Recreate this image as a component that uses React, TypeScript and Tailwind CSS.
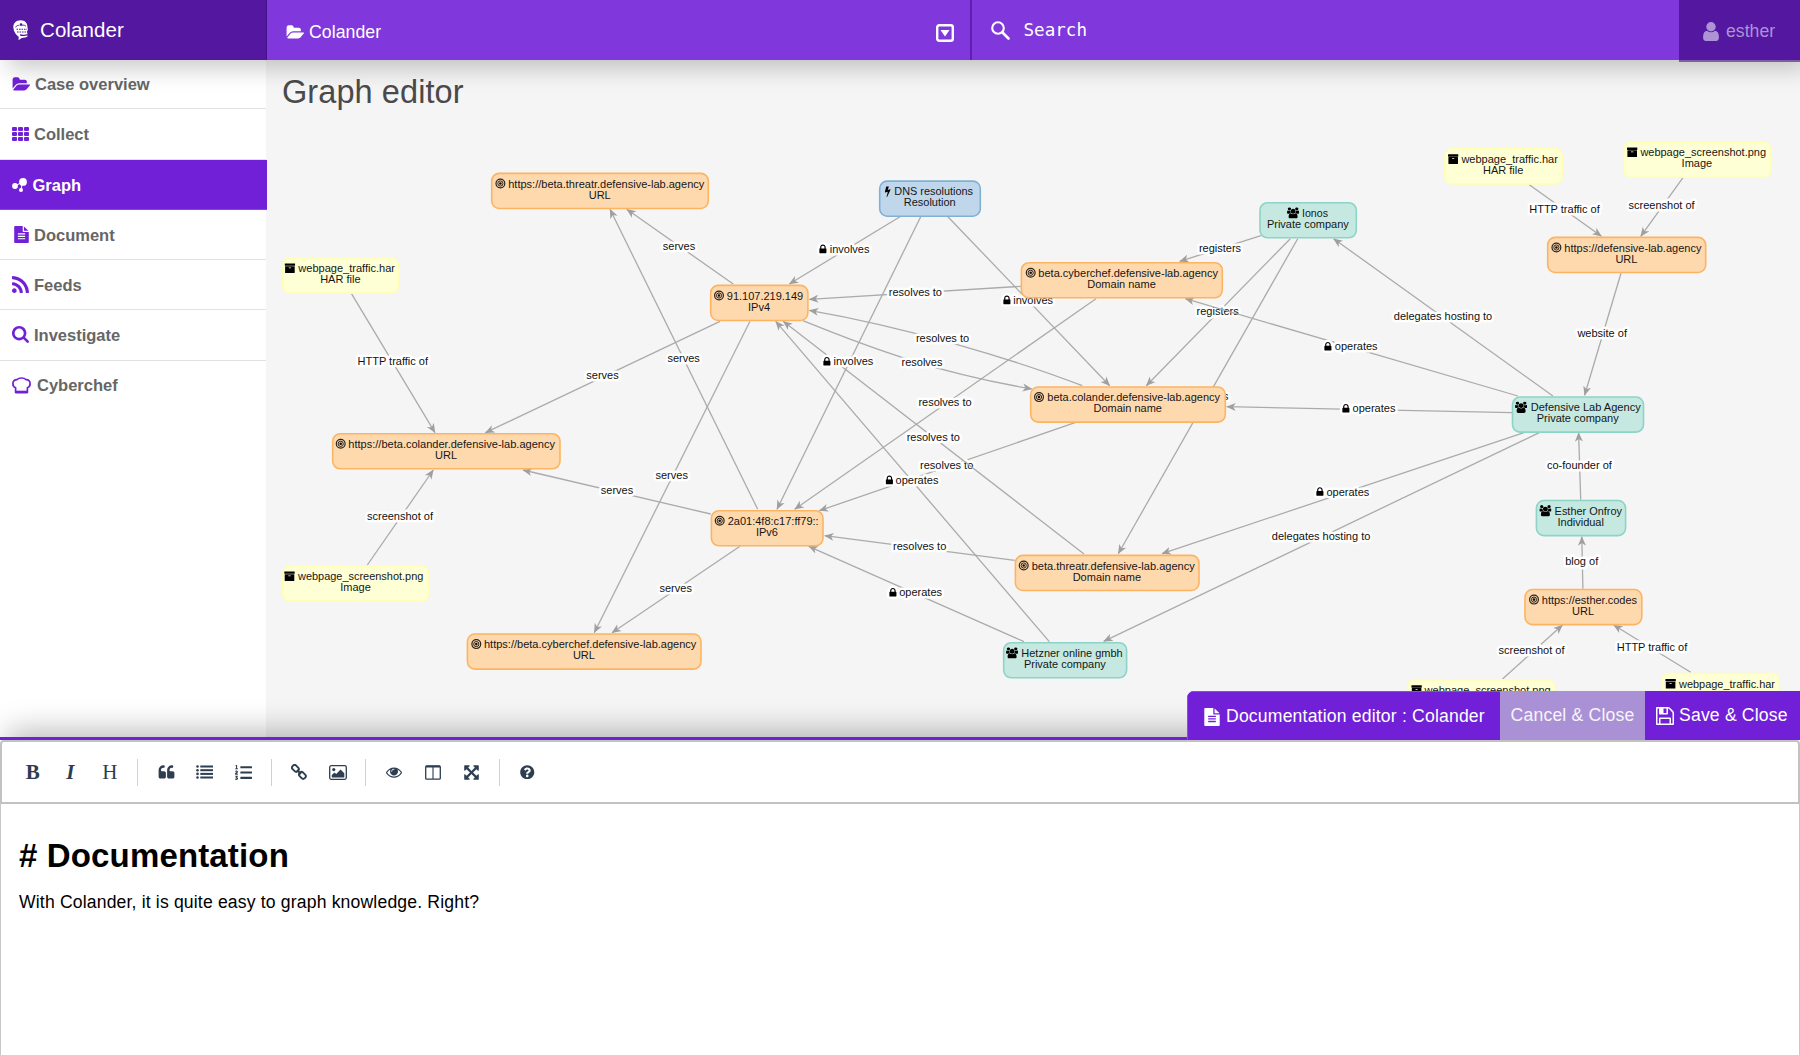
import React from "react";
import { FaListOl, FaQuestionCircle } from "react-icons/fa";

const PATHS = {
  folder:
    "M1943 952q0 31-31 66l-336 396q-43 51-120.5 86.5t-143.5 35.5h-1088q-34 0-60.5-13t-26.5-43q0-31 31-66l336-396q43-51 120.5-86.5t143.5-35.5h1088q34 0 60.5 13t26.5 43zm-343-344v160h-832q-94 0-197 47.5t-164 119.5l-337 396-5 6q0-4-.5-12.5t-.5-12.5v-960q0-92 66-158t158-66h320q92 0 158 66t66 158v32h544q92 0 158 66t66 158z",
  users:
    "M593 896q-162 5-265 128h-134q-82 0-138-40.5t-56-118.5q0-353 124-353 6 0 43.5 21t97.5 42.5 119 21.5q67 0 133-23-5 37-5 66 0 139 81 256zm1071 637q0 120-73 189.5t-194 69.5h-874q-121 0-194-69.5t-73-189.5q0-53 3.5-103.5t14-109 26.5-108.5 43-97.5 62-81 85.5-53.5 111.5-20q10 0 43 21.5t73 48 107 48 135 21.5 135-21.5 107-48 73-48 43-21.5q61 0 111.5 20t85.5 53.5 62 81 43 97.5 26.5 108.5 14 109 3.5 103.5zm-1024-1277q0 106-75 181t-181 75-181-75-75-181 75-181 181-75 181 75 75 181zm704 384q0 159-112.5 271.5t-271.5 112.5-271.5-112.5-112.5-271.5 112.5-271.5 271.5-112.5 271.5 112.5 112.5 271.5zm576 225q0 78-56 118.5t-138 40.5h-134q-103-123-265-128 81-117 81-256 0-29-5-66 66 23 133 23 59 0 119-21.5t97.5-42.5 43.5-21q124 0 124 353zm-128-609q0 106-75 181t-181 75-181-75-75-181 75-181 181-75 181 75 75 181z",
  archive:
    "M1088 832q0-26-19-45t-45-19h-256q-26 0-45 19t-19 45 19 45 45 19h256q26 0 45-19t19-45zm576-192v960q0 26-19 45t-45 19h-1408q-26 0-45-19t-19-45v-960q0-26 19-45t45-19h1408q26 0 45 19t19 45zm64-448v256q0 26-19 45t-45 19h-1536q-26 0-45-19t-19-45v-256q0-26 19-45t45-19h1536q26 0 45 19t19 45z",
  lock: "M640 768h512v-192q0-106-75-181t-181-75-181 75-75 181v192zm832 96v576q0 40-28 68t-68 28h-960q-40 0-68-28t-28-68v-576q0-40 28-68t68-28h32v-192q0-184 132-316t316-132 316 132 132 316v192h32q40 0 68 28t28 68z",
  bolt: "M1333 566q18 20 7 44l-540 1157q-13 25-42 25-4 0-14-2-17-5-25.5-19t-4.5-30l197-808-406 101q-4 1-12 1-18 0-31-11-18-15-13-39l201-825q4-16 16-26t28-10h328q19 0 32 12.5t13 29.5q0 8-5 18l-171 463 396-98q8-2 12-2 19 0 34 15z",
  file: "M1596 476q14 14 28 36h-472v-472q22 14 36 28zm-476 164h544v1056q0 40-28 68t-68 28h-1344q-40 0-68-28t-28-68v-1600q0-40 28-68t68-28h800v544q0 40 28 68t68 28zm160 736v-64q0-14-9-23t-23-9h-704q-14 0-23 9t-9 23v64q0 14 9 23t23 9h704q14 0 23-9t9-23zm0-256v-64q0-14-9-23t-23-9h-704q-14 0-23 9t-9 23v64q0 14 9 23t23 9h704q14 0 23-9t9-23zm0-256v-64q0-14-9-23t-23-9h-704q-14 0-23 9t-9 23v64q0 14 9 23t23 9h704q14 0 23-9t9-23z",
  rss: "M576 1344q0 80-56 136t-136 56-136-56-56-136 56-136 136-56 136 56 56 136zm512 123q2 28-17 48-18 21-47 21h-135q-25 0-43-16.5t-20-41.5q-22-229-184.5-391.5t-391.5-184.5q-25-2-41.5-20t-16.5-43v-135q0-29 21-47 17-17 43-17h5q160 13 306 80.5t259 181.5q114 113 181.5 259t80.5 306zm512 2q2 27-18 47-18 20-46 20h-143q-26 0-44.5-17.5t-19.5-42.5q-12-215-101-408.5t-231.5-336-336-231.5-408.5-102q-25-1-42.5-19.5t-17.5-43.5v-143q0-28 20-46 18-18 44-18h3q262 13 501.5 120t425.5 294q187 186 294 425.5t120 501.5z",
  search:
    "M1216 832q0-185-131.5-316.5t-316.5-131.5-316.5 131.5-131.5 316.5 131.5 316.5 316.5 131.5 316.5-131.5 131.5-316.5zm512 832q0 52-38 90t-90 38q-54 0-90-38l-343-342q-179 124-399 124-143 0-273.5-55.5t-225-150-150-225-55.5-273.5 55.5-273.5 150-225 225-150 273.5-55.5 273.5 55.5 225 150 150 225 55.5 273.5q0 220-124 399l343 343q37 37 37 90z",
  user: "M1536 1399q0 109-62.5 187t-150.5 78h-854q-88 0-150.5-78t-62.5-187q0-85 8.5-160.5t31.5-152 58.5-131 94-89 134.5-34.5q131 128 313 128t313-128q76 0 134.5 34.5t94 89 58.5 131 31.5 152 8.5 160.5zm-256-887q0 159-112.5 271.5t-271.5 112.5-271.5-112.5-112.5-271.5 112.5-271.5 271.5-112.5 271.5 112.5 112.5 271.5z",
  save: "M512 1536h768v-384h-768v384zm896 0h128v-896q0-14-10-38.5t-20-34.5l-281-281q-10-10-34-20t-39-10v416q0 40-28 68t-68 28h-576q-40 0-68-28t-28-68v-416h-128v1280h128v-416q0-40 28-68t68-28h832q40 0 68 28t28 68v416zm-384-928v-320q0-13-9.5-22.5t-22.5-9.5h-192q-13 0-22.5 9.5t-9.5 22.5v320q0 13 9.5 22.5t22.5 9.5h192q13 0 22.5-9.5t9.5-22.5zm640 32v928q0 40-28 68t-68 28h-1344q-40 0-68-28t-28-68v-1344q0-40 28-68t68-28h928q40 0 88 20t76 48l280 280q28 28 48 76t20 88z",
  quote:
    "M832 960v384q0 80-56 136t-136 56h-384q-80 0-136-56t-56-136v-704q0-104 40.5-198.5t109.5-163.5 163.5-109.5 198.5-40.5h64q26 0 45 19t19 45v128q0 26-19 45t-45 19h-64q-106 0-181 75t-75 181v32q0 40 28 68t68 28h224q80 0 136 56t56 136zm896 0v384q0 80-56 136t-136 56h-384q-80 0-136-56t-56-136v-704q0-104 40.5-198.5t109.5-163.5 163.5-109.5 198.5-40.5h64q26 0 45 19t19 45v128q0 26-19 45t-45 19h-64q-106 0-181 75t-75 181v32q0 40 28 68t68 28h224q80 0 136 56t56 136z",
  eye: "M1664 960q-152-236-381-353 61 104 61 225 0 185-131.5 316.5t-316.5 131.5-316.5-131.5-131.5-316.5q0-121 61-225-229 117-381 353 133 205 333.5 326.5t434.5 121.5 434.5-121.5 333.5-326.5zm-720-384q0-20-14-34t-34-14q-125 0-214.5 89.5t-89.5 214.5q0 20 14 34t34 14 34-14 14-34q0-86 61-147t147-61q20 0 34-14t14-34zm848 384q0 34-20 69-140 230-376.5 368.5t-499.5 138.5-499.5-139-376.5-368q-20-35-20-69t20-69q140-229 376.5-368t499.5-139 499.5 139 376.5 368q20 35 20 69z",
  expand:
    "M1411 541l-355 355 355 355 144-144q29-31 70-14 39 17 39 59v448q0 26-19 45t-45 19h-448q-42 0-59-40-17-39 14-69l144-144-355-355-355 355 144 144q31 30 14 69-17 40-59 40h-448q-26 0-45-19t-19-45v-448q0-42 40-59 39-17 69 14l144 144 355-355-355-355-144 144q-19 19-45 19-12 0-24-5-40-17-40-59v-448q0-26 19-45t45-19h448q42 0 59 40 17 39-14 69l-144 144 355 355 355-355-144-144q-31-30-14-69 17-40 59-40h448q26 0 45 19t19 45v448q0 42-39 59-13 5-25 5-26 0-45-19z",
};

type IconName = keyof typeof PATHS;

function Icon({ name, className, box = "0 0 1792 1792" }: { name: IconName; className: string; box?: string }) {
  return (
    <svg viewBox={box} className={className} fill="currentColor">
      <path d={PATHS[name]} />
    </svg>
  );
}

function Logo() {
  return (
    <svg viewBox="0 0 16 21" className="h-[21px] w-4 shrink-0" fill="none">
      <path
        d="M.3 7.500C.2 3 3.200.2 7.600.2c4.400 0 7 2.800 6.900 7.300l.4 2.600-.8.900.6 5.300c-1.200 1.100-3.600 1.500-6 1.600l-3.200 2.400.2-3.600C3.300 15.300.8 12 .3 7.500z"
        fill="#fff"
      />
      <path d="M2.500 7.400C3.500 5.500 5 5 6.300 5.600M9 5.400c1.500-.6 3-.2 4 1" stroke="#5317a0" strokeWidth=".9" />
      <path d="M3.500 9.300h10.500M4 12h11" stroke="#5317a0" strokeWidth="1.100" strokeDasharray="1.600 .9" />
      <path d="M7 14.900c2.500.8 5 .7 8.500-.3" stroke="#5317a0" strokeWidth="1.300" />
      <circle cx="8" cy="4.600" r="1.300" fill="#5317a0" />
    </svg>
  );
}

type Kind = "file" | "obs" | "event" | "actor";
const FILL: Record<Kind, string> = { file: "#ffffd6", obs: "#fed9ae", event: "#c0d7eb", actor: "#c5e9e1" };
const STROKE: Record<Kind, string> = { file: "#ffffb3", obs: "#fdb462", event: "#80b1d3", actor: "#8dd3c7" };

/* x, y, width, kind, icon x, text start, text end, title, subtitle */
type NodeT = [number, number, number, Kind, number, number, number, string, string];
const NODES: NodeT[] = [
  [282, 257.3, 117.3, "file", 284.7, 298.3, 395, "webpage_traffic.har", "HAR file"],
  [332, 433, 228.7, "obs", 335.7, 348.3, 555, "https://beta.colander.defensive-lab.agency", "URL"],
  [282, 565.3, 147.7, "file", 284.3, 298, 423.3, "webpage_screenshot.png", "Image"],
  [491, 172.7, 218, "obs", 495.4, 508.2, 704.3, "https://beta.threatr.defensive-lab.agency", "URL"],
  [879, 180.4, 102, "event", 885, 894.3, 973, "DNS resolutions", "Resolution"],
  [710, 284.7, 98.6, "obs", 714, 726.8, 803.2, "91.107.219.149", "IPv4"],
  [1020.7, 262, 202.3, "obs", 1025.7, 1038.3, 1218, "beta.cyberchef.defensive-lab.agency", "Domain name"],
  [1030, 386.3, 196, "obs", 1034, 1047.3, 1220, "beta.colander.defensive-lab.agency", "Domain name"],
  [710.7, 510, 113, "obs", 714.7, 727.7, 818.7, "2a01:4f8:c17:ff79::", "IPv6"],
  [466.7, 633.3, 235, "obs", 471.3, 484, 696.3, "https://beta.cyberchef.defensive-lab.agency", "URL"],
  [1014.7, 554.7, 185, "obs", 1018.7, 1031.7, 1194.7, "beta.threatr.defensive-lab.agency", "Domain name"],
  [1003, 642, 124.3, "actor", 1006, 1021.3, 1122.7, "Hetzner online gmbh", "Private company"],
  [1259.3, 202, 97.7, "actor", 1287, 1302, 1328, "Ionos", "Private company"],
  [1444, 148.2, 119, "file", 1448, 1461.4, 1557.9, "webpage_traffic.har", "HAR file"],
  [1623, 141.4, 148.4, "file", 1627, 1640.4, 1766, "webpage_screenshot.png", "Image"],
  [1547, 236.7, 159.4, "obs", 1551.4, 1564.3, 1701.4, "https://defensive-lab.agency", "URL"],
  [1511.8, 396.3, 132.4, "actor", 1515, 1530.7, 1640.7, "Defensive Lab Agency", "Private company"],
  [1535.7, 499.8, 90.6, "actor", 1539.3, 1554.6, 1622, "Esther Onfroy", "Individual"],
  [1524.3, 588.8, 118.2, "obs", 1529, 1541.8, 1637, "https://esther.codes", "URL"],
  [1406.8, 679.2, 148.9, "file", 1411.4, 1424.6, 1550.7, "webpage_screenshot.png", "Image"],
  [1661, 672.8, 119, "file", 1665.4, 1679, 1775, "webpage_traffic.har", "HAR file"],
];

/* start x, start y, tip x, tip y, label, label centre x, label centre y, lock x, curve control */
type EdgeT = [number, number, number, number, string, number, number, number?, string?];
const EDGES: EdgeT[] = [
  [351.3, 293.3, 435, 432.7, "HTTP traffic of", 392.8, 361.3],
  [367.3, 565, 433.3, 470, "screenshot of", 400, 516.3],
  [733.2, 284, 626.8, 209.3, "serves", 679, 246],
  [757.7, 509.3, 610, 209.3, "serves", 683.6, 358.7],
  [720, 321.3, 485.4, 432.7, "serves", 602.5, 375.7],
  [750, 321.3, 594.3, 632.7, "serves", 671.7, 475.7],
  [710.7, 514, 523, 470, "serves", 617, 490.7],
  [740, 546.3, 612, 632.7, "serves", 675.7, 588.3],
  [1261, 235.7, 1179.7, 261.3, "registers", 1220, 248],
  [1290.3, 238.7, 1146.3, 385.7, "registers", 1217.7, 311.3],
  [1297.7, 238.7, 1118.3, 553.7, "registers", 1207.5, 396],
  [1021, 286.3, 809.3, 299.3, "resolves to", 915.4, 292],
  [1082.3, 385.7, 809.3, 310.3, "resolves to", 942.5, 338.3, 0, "C1010 358 905 327"],
  [802.9, 320.7, 1031.7, 389, "resolves", 922, 362.3, 0, "C880 352 940 373"],
  [1096, 298.7, 794.7, 509.3, "resolves to", 945, 402.7],
  [1075, 422.7, 819.3, 510.7, "resolves to", 946.7, 465.7],
  [1084, 554, 783.2, 321.3, "resolves to", 933.3, 437],
  [1014.7, 560.3, 824.7, 535.7, "resolves to", 919.7, 546.7],
  [1049.3, 641.7, 775.7, 321.3, "operates", 917, 480.3, 885.5],
  [1024, 641.7, 808.7, 546.3, "operates", 920.6, 592.7, 889],
  [900, 216.7, 789.3, 284, "involves", 849.6, 249.3, 819],
  [920.7, 216.7, 777, 509.3, "involves", 853.4, 361.7, 823],
  [947.9, 216.7, 1109.7, 385.7, "involves", 1033.2, 300.3, 1003],
  [1552.9, 396, 1333.6, 238.7, "delegates hosting to", 1443, 316],
  [1517.9, 396, 1185.3, 298.7, "operates", 1356.2, 346.7, 1324],
  [1512, 412.7, 1226.7, 406.7, "operates", 1374, 408.7, 1342],
  [1524, 432.7, 1162, 553.7, "operates", 1347.9, 492, 1316],
  [1539.3, 432.7, 1103.7, 641.3, "delegates hosting to", 1321.1, 536],
  [1621, 273.3, 1584.6, 395.3, "website of", 1602.2, 333.3],
  [1529.3, 184.7, 1601.4, 236.3, "HTTP traffic of", 1564.5, 209],
  [1683, 177.7, 1640.7, 236.3, "screenshot of", 1661.6, 205.7],
  [1580.7, 499.7, 1578.6, 432.7, "co-founder of", 1579.4, 465.7],
  [1582.9, 588.7, 1581.8, 536.7, "blog of", 1581.7, 561.7],
  [1502.5, 679, 1562.5, 625, "screenshot of", 1531.5, 650.7],
  [1690.7, 672.3, 1613.6, 625, "HTTP traffic of", 1652, 647.3],
];

function Edge({ e }: { e: EdgeT }) {
  const [x1, y1, x2, y2, label, lx, ly, lock, curve] = e;
  const d = curve ? `M${x1} ${y1}${curve} ${x2} ${y2}` : `M${x1} ${y1}L${x2} ${y2}`;
  const lockX = (lock ?? 0) - 1.6;
  return (
    <g>
      <path d={d} stroke="#ababab" strokeWidth="1.300" fill="none" markerEnd="url(#vee)" />
      {lock ? (
        <svg x={lockX} y={ly - 5.6} width="11" height="11" viewBox="0 0 1792 1792" overflow="visible">
          <path d={PATHS.lock} stroke="#fff" strokeWidth="800" strokeLinejoin="round" />
        </svg>
      ) : null}
      <text
        x={lx}
        y={ly + 3.6}
        textAnchor="middle"
        stroke="#fff"
        strokeWidth="5"
        strokeLinejoin="round"
        fill="#111"
        style={{ paintOrder: "stroke" }}
      >
        {label}
      </text>
      {lock ? (
        <svg x={lockX} y={ly - 5.6} width="11" height="11" viewBox="0 0 1792 1792">
          <path d={PATHS.lock} />
        </svg>
      ) : null}
    </g>
  );
}

function NodeIcon({ kind, x, y }: { kind: Kind; x: number; y: number }) {
  if (kind === "obs") {
    return (
      <g fill="none" stroke="#2a2119">
        <circle cx={x + 5} cy={y + 4.8} r="4.400" strokeWidth="1.200" />
        <circle cx={x + 5} cy={y + 4.8} r="2.600" strokeWidth="1" />
        <circle cx={x + 5} cy={y + 4.8} r="1.300" fill="#111" stroke="none" />
      </g>
    );
  }
  if (kind === "actor") {
    return (
      <svg x={x} y={y - 0.8} width="12.2" height="11.4" viewBox="0 0 1920 1792">
        <path d={PATHS.users} />
      </svg>
    );
  }
  if (kind === "event") {
    return (
      <svg x={x - 3} y={y - 0.6} width="11.400" height="11.400" viewBox="0 0 1792 1792">
        <path d={PATHS.bolt} />
      </svg>
    );
  }
  return (
    <svg x={x - 0.4} y={y - 0.7} width="11.200" height="11.200" viewBox="0 0 1792 1792">
      <path d={PATHS.archive} />
    </svg>
  );
}

function GraphNode({ n }: { n: NodeT }) {
  const [x, y, w, kind, ix, t0, t1, title, sub] = n;
  return (
    <g>
      <rect x={x + 0.7} y={y + 0.7} width={w - 1.4} height="35.1" rx="7.500" fill={FILL[kind]} stroke={STROKE[kind]} strokeWidth="1.600" />
      <NodeIcon kind={kind} x={ix} y={y + 6} />
      <text x={t0} y={y + 15} textLength={t1 - t0} lengthAdjust="spacingAndGlyphs" fill="#161616">
        {title}
      </text>
      <text x={x + w / 2 - 0.3} y={y + 26} textAnchor="middle" fill="#161616">
        {sub}
      </text>
    </g>
  );
}

function Graph() {
  return (
    <svg
      viewBox="266 120 1534 617"
      className="block h-[617px] w-[1534px] font-['Liberation_Sans',Arial,sans-serif] text-[11px]"
    >
      <defs>
        <marker id="vee" viewBox="0 0 10 10" refX="9.500" refY="5" markerWidth="9.500" markerHeight="9.500" markerUnits="userSpaceOnUse" orient="auto">
          <path d="M0 .8L10 5L0 9.200L2.800 5z" fill="#9f9f9f" />
        </marker>
      </defs>
      {EDGES.map((e, i) => (
        <Edge key={i} e={e} />
      ))}
      {NODES.map((n, i) => (
        <GraphNode key={i} n={n} />
      ))}
    </svg>
  );
}

function GridIcon() {
  return (
    <svg viewBox="0 0 17 14" className="h-[14px] w-[17px]" fill="currentColor">
      {[0, 5, 10].map((y) => [0, 6, 12].map((x) => <rect key={`${x}-${y}`} x={x} y={y} width="5" height="4" rx="1" />))}
    </svg>
  );
}

function NodesIcon() {
  return (
    <svg viewBox="0 0 15 14" className="h-[14px] w-[15px]" fill="currentColor" stroke="currentColor">
      <path d="M3 8L10.500 4L9 12" fill="none" strokeWidth="1" />
      <circle cx="3" cy="8" r="2.900" stroke="none" />
      <circle cx="11" cy="3.900" r="3.900" stroke="none" />
      <circle cx="9" cy="12" r="2" stroke="none" />
    </svg>
  );
}

function ChefHat() {
  return (
    <svg viewBox="0 0 19 17" className="h-[17px] w-[19px]" fill="none" stroke="currentColor" strokeWidth="1.700" strokeLinejoin="round">
      <path d="M3.600 15.500V10.800C1.700 10 .9 8.600.9 6.700C.9 4.200 2.600 2.600 4.900 2.700C6 1.500 7.600 1 9.500 1S13 1.500 14.100 2.700C16.400 2.600 18.100 4.200 18.100 6.700C18.100 8.600 17.300 10 15.400 10.800V15.500z" />
      <path d="M3.600 15H15.400" strokeWidth="2.600" />
    </svg>
  );
}

type NavItem = { label: string; icon: React.ReactNode; row: string };
const NAV: NavItem[] = [
  { label: "Case overview", icon: <Icon name="folder" box="0 100 1943 1600" className="h-[15px] w-[18px]" />, row: "h-[49px] gap-[5px]" },
  { label: "Collect", icon: <GridIcon />, row: "h-[51px] gap-[5px]" },
  { label: "Graph", icon: <NodesIcon />, row: "h-[50px] gap-[5.500px]" },
  { label: "Document", icon: <Icon name="file" className="ml-px h-[17px] w-[17px] -mr-px" />, row: "h-[50px] gap-[5px]" },
  { label: "Feeds", icon: <Icon name="rss" box="192 128 1408 1408" className="h-[17px] w-[17px]" />, row: "h-[50px] gap-[5px]" },
  { label: "Investigate", icon: <Icon name="search" box="64 128 1664 1664" className="h-[17px] w-[17px]" />, row: "h-[50.500px] gap-[5px]" },
  { label: "Cyberchef", icon: <ChefHat />, row: "h-[50px] gap-[6px]" },
];

function Sidebar() {
  return (
    <nav className="w-[266px] shrink-0 bg-white">
      {NAV.map((item, i) => {
        const active = item.label === "Graph";
        return (
          <div
            key={item.label}
            className={`flex items-center border-b pl-3 text-[16.5px] font-bold ${item.row} ${
              active
                ? "w-[267px] border-[#7b5ba0] bg-[#7120d8] text-white"
                : i === NAV.length - 1
                ? "border-transparent text-[#666]"
                : "border-[#e2e2e2] text-[#666]"
            }`}
          >
            <span className={active ? "text-white" : "text-[#7120d8]"}>{item.icon}</span>
            <span className="leading-5">{item.label}</span>
          </div>
        );
      })}
    </nav>
  );
}

function Header() {
  return (
    <header className="relative z-10 flex h-[60px] shrink-0 bg-[#8037dc] text-white shadow-[8px_8px_24px_rgba(0,0,0,0.22)]">
      <div className="flex w-[267px] items-center gap-[11px] border-r border-[#43128a] bg-[#5317a0] pl-[13px] text-[20.5px] tracking-[0.08px]">
        <Logo />
        <span>Colander</span>
      </div>
      <div className="flex w-[704.500px] items-center border-r-2 border-[#5f1fb5] pl-[19px] pr-[16px] pt-[5px]">
        <Icon name="folder" box="0 100 1943 1600" className="h-[15px] w-[18px]" />
        <span className="ml-[5px] text-[17.700px] tracking-[0.05px]">Colander</span>
        <svg viewBox="0 0 18 18" className="ml-auto h-[18px] w-[18px]">
          <rect x="1.200" y="1.200" width="15.600" height="15.600" rx="2" fill="none" stroke="#fff" strokeWidth="2.400" />
          <path d="M4.500 6h9l-4.500 6.500z" fill="#fff" />
        </svg>
      </div>
      <div className="flex grow items-center pl-[19px] pt-px">
        <svg viewBox="0 0 19 19" className="h-[19px] w-[19px]" fill="none" stroke="#fff" strokeLinecap="round">
          <circle cx="7" cy="7" r="5.800" strokeWidth="2.100" />
          <path d="M11.500 11.500L17.500 17.500" strokeWidth="2.600" />
        </svg>
        <span className="ml-[14px] font-['DejaVu_Sans_Mono',monospace] text-[17.600px]">Search</span>
      </div>
      <div className="flex h-[62px] w-[121px] items-center border-b-2 border-[#7c5fa3] bg-[#5317a0] pl-6 pt-[2px] text-[17.600px] text-[#ae92d6]">
        <Icon name="user" box="256 128 1280 1536" className="h-[19px] w-4" />
        <span className="ml-[7px] tracking-[0.05px]">esther</span>
      </div>
    </header>
  );
}

function Sep() {
  return <span className="mx-[8.400px] h-[27px] w-px bg-[#d2d2d2]" />;
}

function Tool({ children }: { children: React.ReactNode }) {
  return <button className="flex h-[30px] w-[38.500px] items-center justify-center">{children}</button>;
}

function Toolbar() {
  return (
    <div className="flex h-[64px] items-center rounded-t-[4px] border-2 border-[#c2c2c2] pl-[11.500px] font-['Liberation_Serif',serif] text-[21px] leading-none text-[#2c3e50]">
      <Tool><span className="font-bold">B</span></Tool>
      <Tool><span className="pr-0.5 font-bold italic">I</span></Tool>
      <Tool><span>H</span></Tool>
      <Sep />
      <Tool><Icon name="quote" className="h-[17px] w-[17px]" /></Tool>
      <Tool>
        <svg viewBox="0 0 17 14" className="h-[14px] w-[17px]" fill="currentColor">
          {[1.500, 5.200, 8.900, 12.500].map((y) => (
            <g key={y}>
              <circle cx="1.500" cy={y} r="1.300" />
              <rect x="4.300" y={y - 1} width="12.700" height="2" />
            </g>
          ))}
        </svg>
      </Tool>
      <Tool><FaListOl size={17} /></Tool>
      <Sep />
      <Tool>
        <svg viewBox="0 0 16 16" className="h-4 w-4" fill="none" stroke="currentColor" strokeWidth="1.900">
          <rect x="-3.600" y="-2.500" width="7.200" height="5" rx="2.200" transform="translate(4.400 4.400) rotate(45)" />
          <rect x="-3.600" y="-2.500" width="7.200" height="5" rx="2.200" transform="translate(11.400 11.400) rotate(45)" />
          <path d="M6 6l4 4" />
        </svg>
      </Tool>
      <Tool>
        <svg viewBox="0 0 18 15" className="h-[15px] w-[18px]">
          <rect x=".7" y=".7" width="16.600" height="13.600" rx="1.500" fill="none" stroke="currentColor" strokeWidth="1.300" />
          <circle cx="4.800" cy="4.600" r="1.600" fill="currentColor" />
          <path d="M2.800 12.500V10L5.500 7.500L7.200 9L11.500 4.500L15.300 8.200V12.500z" fill="currentColor" />
        </svg>
      </Tool>
      <Sep />
      <Tool><Icon name="eye" className="h-4 w-4" /></Tool>
      <Tool>
        <svg viewBox="0 0 16 15" className="h-[15px] w-4" fill="none" stroke="currentColor" strokeWidth="1.300">
          <rect x=".7" y=".9" width="14.600" height="13.300" rx="1" />
          <path d="M1 1.600H15" strokeWidth="1.800" />
          <path d="M8 1V14" strokeWidth="1.100" />
        </svg>
      </Tool>
      <Tool><Icon name="expand" className="h-[17px] w-[17px]" /></Tool>
      <Sep />
      <Tool><FaQuestionCircle size={14.5} /></Tool>
    </div>
  );
}

function Editor() {
  return (
    <section className="relative z-20 flex h-[318px] shrink-0 flex-col border-t-[3px] border-[#7120d8] bg-white shadow-[8px_-6px_28px_rgba(0,0,0,0.28)]">
      <div className="absolute right-0 -top-[49px] flex h-[49px] w-[613px] overflow-hidden rounded-tl-[7px] text-[17.600px] text-white">
        <div className="flex w-[313px] items-center border-l border-t border-[#8d4ee0] bg-[#7120d8] pl-[14.500px] pt-px">
          <Icon name="file" className="h-[18px] w-[18px]" />
          <span className="ml-[5.500px] whitespace-nowrap tracking-[0.18px]">Documentation editor : Colander</span>
        </div>
        <div className="flex w-[145px] items-center justify-center whitespace-nowrap bg-[#aa90d4] tracking-[0.18px] text-white/90">
          Cancel &amp; Close
        </div>
        <div className="flex w-[155px] items-center whitespace-nowrap bg-[#7120d8] pl-[11px]">
          <Icon name="save" box="128 128 1536 1536" className="h-[18px] w-[18px]" />
          <span className="ml-[5px] tracking-[0.18px]">Save &amp; Close</span>
        </div>
      </div>
      <Toolbar />
      <div className="grow border-x border-[#c8c8c8] pl-[18px] pt-[32px] text-black">
        <h1 className="text-[33px] font-bold leading-[40px] tracking-[0.15px]">
          # Documentation
        </h1>
        <p className="mt-[14px] text-[17.600px] leading-6 tracking-[0.16px]">
          With Colander, it is quite easy to graph knowledge. Right?
        </p>
      </div>
    </section>
  );
}

export default function App() {
  return (
    <div className="flex h-[1055px] w-[1800px] flex-col overflow-hidden bg-[#f5f5f5] font-['Liberation_Sans',Arial,sans-serif]">
      <Header />
      <div className="flex h-[677px] shrink-0 overflow-hidden">
        <Sidebar />
        <main className="flex w-[1534px] flex-col">
          <h2 className="h-[60px] pl-[16px] pt-[12px] text-[32.500px] leading-[40px] tracking-[0.08px] text-[#4a4a4a]">Graph editor</h2>
          <Graph />
        </main>
      </div>
      <Editor />
    </div>
  );
}
